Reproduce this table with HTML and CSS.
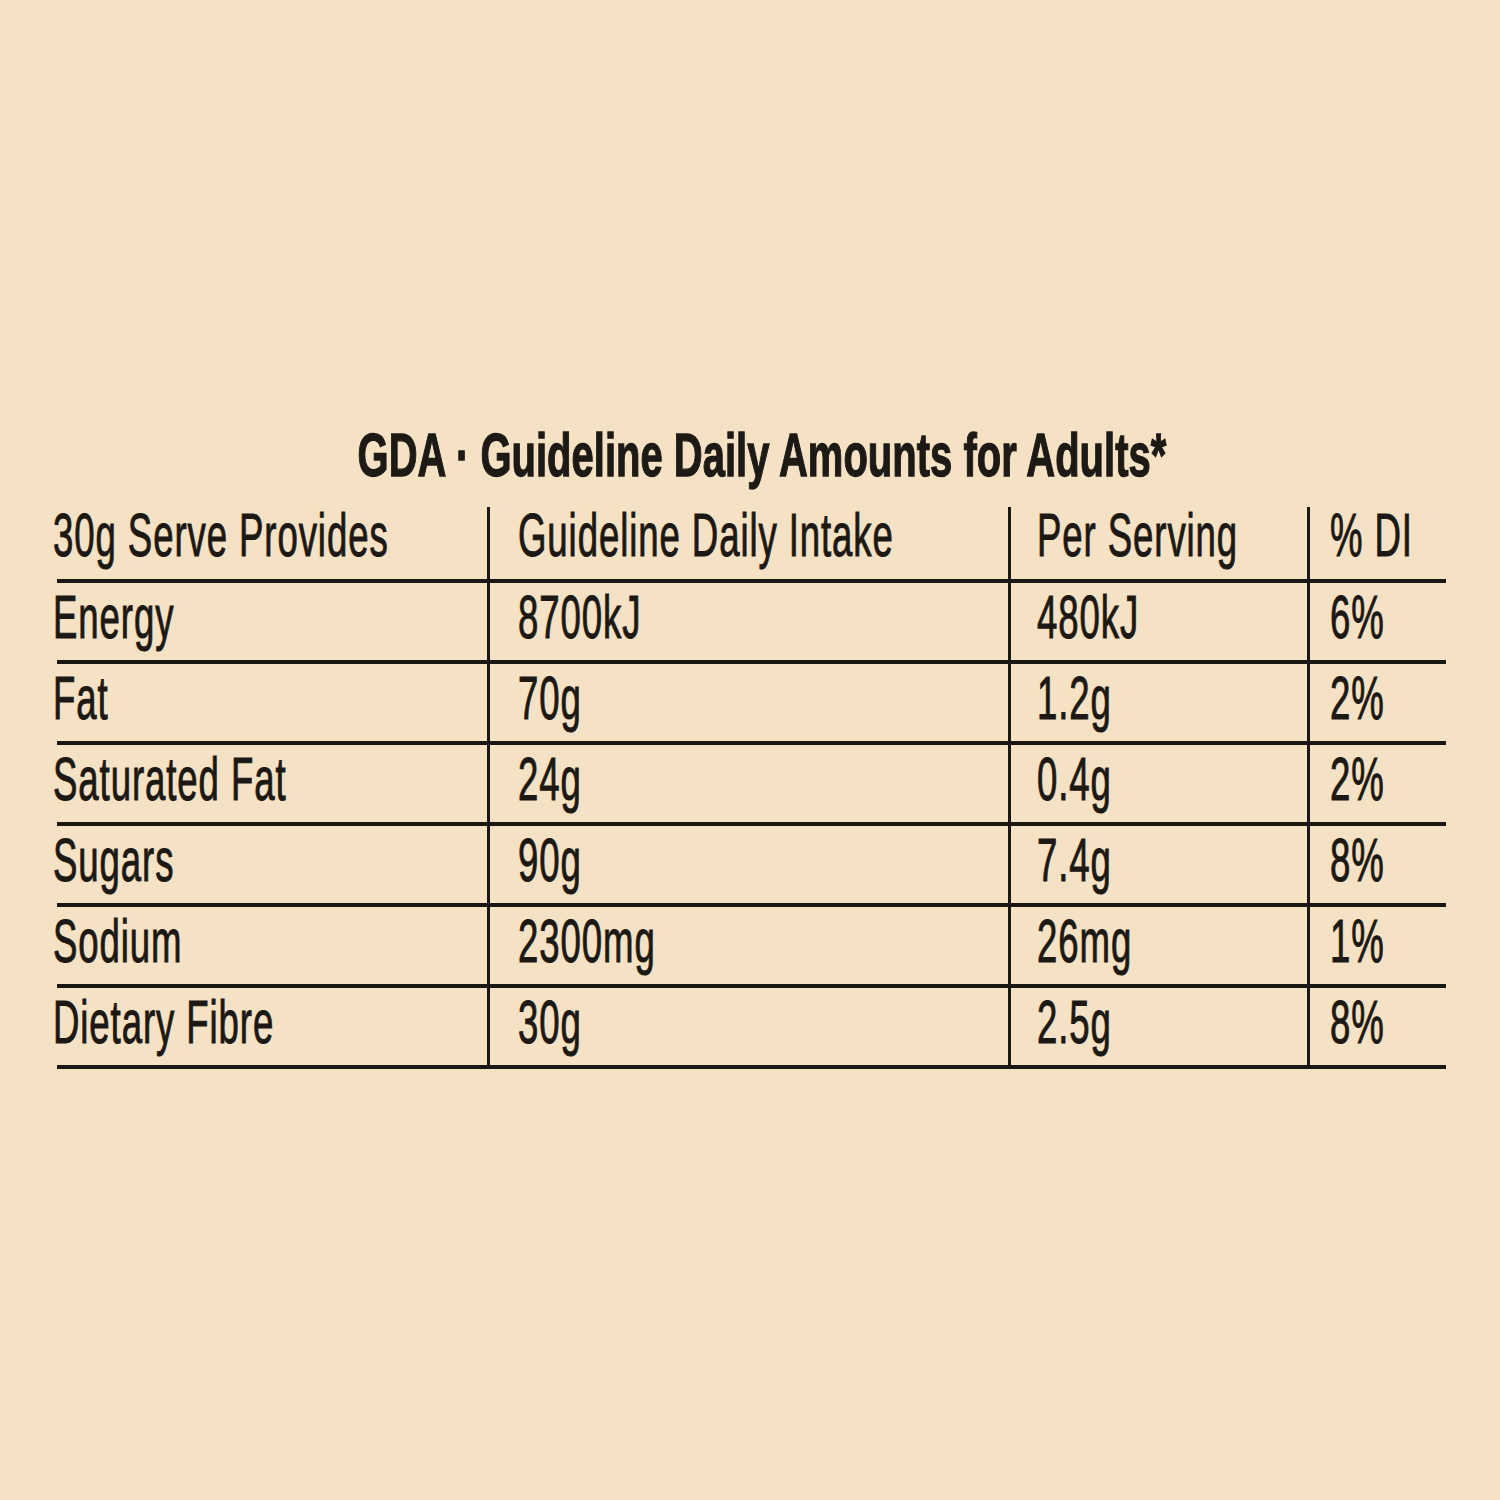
FILE: index.html
```html
<!DOCTYPE html>
<html lang="en">
<head>
<meta charset="utf-8">
<title>GDA - Guideline Daily Amounts for Adults</title>
<link rel="stylesheet" href="styles.css">
</head>
<body>
<main class="page">
  <h1 class="title"><span class="title-text">GDA · Guideline Daily Amounts for Adults*</span></h1>
  <div class="table">
    <div class="row head">
      <div class="cell c1"><span class="t">30g Serve Provides</span></div>
      <div class="cell c2"><span class="t">Guideline Daily Intake</span></div>
      <div class="cell c3"><span class="t">Per Serving</span></div>
      <div class="cell c4"><span class="t">% DI</span></div>
    </div>
    <div class="row">
      <div class="cell c1"><span class="t">Energy</span></div>
      <div class="cell c2"><span class="t">8700kJ</span></div>
      <div class="cell c3"><span class="t">480kJ</span></div>
      <div class="cell c4"><span class="t">6%</span></div>
    </div>
    <div class="row">
      <div class="cell c1"><span class="t">Fat</span></div>
      <div class="cell c2"><span class="t">70g</span></div>
      <div class="cell c3"><span class="t">1.2g</span></div>
      <div class="cell c4"><span class="t">2%</span></div>
    </div>
    <div class="row">
      <div class="cell c1"><span class="t">Saturated Fat</span></div>
      <div class="cell c2"><span class="t">24g</span></div>
      <div class="cell c3"><span class="t">0.4g</span></div>
      <div class="cell c4"><span class="t">2%</span></div>
    </div>
    <div class="row">
      <div class="cell c1"><span class="t">Sugars</span></div>
      <div class="cell c2"><span class="t">90g</span></div>
      <div class="cell c3"><span class="t">7.4g</span></div>
      <div class="cell c4"><span class="t">8%</span></div>
    </div>
    <div class="row">
      <div class="cell c1"><span class="t">Sodium</span></div>
      <div class="cell c2"><span class="t">2300mg</span></div>
      <div class="cell c3"><span class="t">26mg</span></div>
      <div class="cell c4"><span class="t">1%</span></div>
    </div>
    <div class="row">
      <div class="cell c1"><span class="t">Dietary Fibre</span></div>
      <div class="cell c2"><span class="t">30g</span></div>
      <div class="cell c3"><span class="t">2.5g</span></div>
      <div class="cell c4"><span class="t">8%</span></div>
    </div>
  </div>
</main>
</body>
</html>
```

FILE: styles.css
```css
* {
  box-sizing: border-box;
}

html, body {
  margin: 0;
  padding: 0;
}

body {
  width: 1500px;
  height: 1500px;
  background-color: #f5e1c4;
  color: #1d1a16;
  font-family: "Liberation Sans", Arial, sans-serif;
  overflow: hidden;
}

.page {
  padding-top: 424px;
}

.title {
  margin: 0 0 21px 0;
  padding-left: 23px;
  display: flex;
  justify-content: center;
  font-size: 62px;
  line-height: 62px;
  font-weight: 700;
}

.title-text {
  display: inline-block;
  white-space: nowrap;
  transform: scaleX(0.645);
  transform-origin: 50% 50%;
  -webkit-text-stroke: 1.3px #1d1a16;
}

.table {
  margin-left: 57px;
  width: 1389px;
  color: #1c1915;
}

.row {
  display: grid;
  grid-template-columns: 430px 521px 299px 139px;
  height: 81px;
  border-bottom: 4px solid #1a1714;
}

.row.head {
  height: 76px;
}

.cell {
  font-size: 61px;
  line-height: 68px;
  white-space: nowrap;
}

.head .cell {
  line-height: 56px;
}

.cell + .cell {
  border-left: 3px solid #1a1714;
}

.c1 {
  padding-left: 0;
}

.c1 .t {
  margin-left: -4px;
}

.c2 {
  padding-left: 28px;
}

.c3 {
  padding-left: 26px;
}

.c4 {
  padding-left: 20px;
}

.t {
  display: inline-block;
  white-space: nowrap;
  letter-spacing: 1.5px;
  transform: scaleX(0.6);
  transform-origin: 0 50%;
  -webkit-text-stroke: 1px #1c1915;
}
```
